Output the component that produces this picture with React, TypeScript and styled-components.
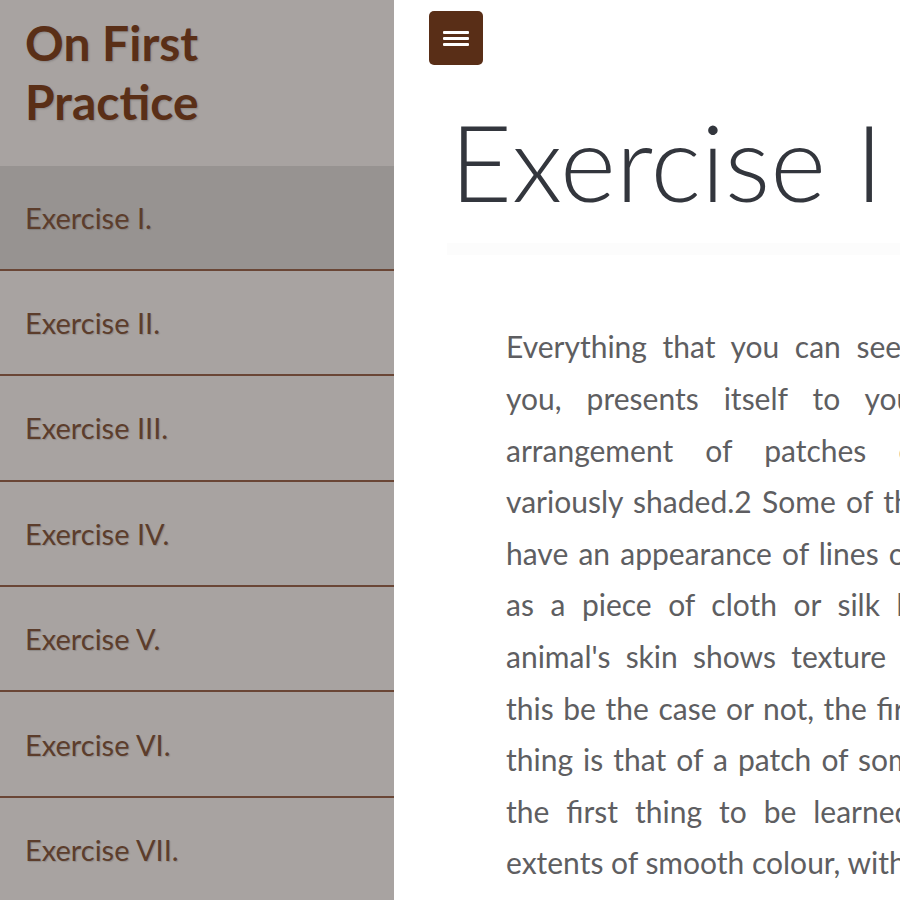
import React from 'react';
import styled, { createGlobalStyle } from 'styled-components';

const GlobalStyle = createGlobalStyle`
    html, body {
        margin: 0;
        padding: 0;
        overflow: hidden;
        background: #ffffff;
        font-family: Lato, 'Open Sans', sans-serif;
    }
`;

const Page = styled.div`
    display: flex;
    width: 1400px;
    height: 100vh;
`;

const Sidebar = styled.nav`
    width: 394px;
    flex-shrink: 0;
    background-color: #a8a3a1;
    display: flex;
    flex-direction: column;
    overflow: hidden;
`;

const Brand = styled.h1`
    margin: 0;
    flex-shrink: 0;
    height: 165.5px;
    box-sizing: border-box;
    padding: 13px 25px 0;
    font-size: 48px;
    line-height: 59px;
    font-weight: 700;
    color: #5a2f17;
    text-shadow: 1px 1px 2px rgba(0, 0, 0, 0.18);
`;

const NavItem = styled.a<{ active?: boolean }>`
    display: flex;
    flex-shrink: 0;
    align-items: center;
    height: 105.4px;
    box-sizing: border-box;
    padding-left: 25px;
    border-bottom: 2px solid #6a4636;
    background-color: ${(props) => (props.active ? '#979391' : 'transparent')};
    font-size: 29px;
    color: #5c3d2c;
    text-shadow: 1px 1px 1px rgba(0, 0, 0, 0.15);
    text-decoration: none;
    cursor: pointer;
`;

const Main = styled.main`
    flex: 1;
    padding: 11px 0 0 35px;
`;

const MenuButton = styled.button`
    width: 54px;
    height: 54px;
    border: none;
    border-radius: 5px;
    background-color: #592e17;
    display: flex;
    align-items: center;
    justify-content: center;
    padding: 0;
    cursor: pointer;
`;

const Content = styled.section`
    margin-left: 18px;
    margin-top: 32px;
`;

const Heading = styled.h2`
    margin: 0;
    padding-left: 3px;
    font-size: 107px;
    line-height: 1.2;
    font-weight: 300;
    color: #33363d;
`;

const Divider = styled.div`
    height: 12px;
    margin-top: 18px;
    background: #fcfcfc;
`;

const Paragraph = styled.p`
    margin: 66px 0 0 59px;
    width: 692px;
    font-size: 30px;
    line-height: 51.6px;
    color: #5e5e61;
`;

const Line = styled.span<{ last?: boolean }>`
    display: block;
    text-align: ${(props) => (props.last ? 'left' : 'justify')};
    text-align-last: ${(props) => (props.last ? 'left' : 'justify')};
`;

const exercises = ['I', 'II', 'III', 'IV', 'V', 'VI', 'VII', 'VIII'];

const lines = [
    'Everything that you can see in the world around',
    'you, presents itself to your eyes only as an',
    'arrangement of patches of different colours',
    'variously shaded.2 Some of these patches of colour',
    'have an appearance of lines or texture within them,',
    'as a piece of cloth or silk has of threads, or an',
    "animal's skin shows texture of hairs: but whether",
    'this be the case or not, the first broad aspect of the',
    'thing is that of a patch of some definite colour; and',
    'the first thing to be learned is, how to produce',
    'extents of smooth colour, without texture.',
];

const App = () => {
    return (
        <Page>
            <GlobalStyle />
            <Sidebar>
                <Brand>
                    On First
                    <br />
                    Practice
                </Brand>
                {exercises.map((n, i) => (
                    <NavItem key={n} active={i === 0}>
                        Exercise {n}.
                    </NavItem>
                ))}
            </Sidebar>
            <Main>
                <MenuButton aria-label="menu">
                    <svg width="26" height="18" viewBox="0 0 26 18">
                        <rect x="0" y="2" width="26" height="3" rx="1" fill="#ffffff" />
                        <rect x="0" y="8" width="26" height="3" rx="1" fill="#ffffff" />
                        <rect x="0" y="14" width="26" height="3" rx="1" fill="#ffffff" />
                    </svg>
                </MenuButton>
                <Content>
                    <Heading>Exercise I</Heading>
                    <Divider />
                    <Paragraph>
                        {lines.map((l, i) => (
                            <Line key={i} last={i === lines.length - 1}>
                                {l}
                            </Line>
                        ))}
                    </Paragraph>
                </Content>
            </Main>
        </Page>
    );
};

export default App;
